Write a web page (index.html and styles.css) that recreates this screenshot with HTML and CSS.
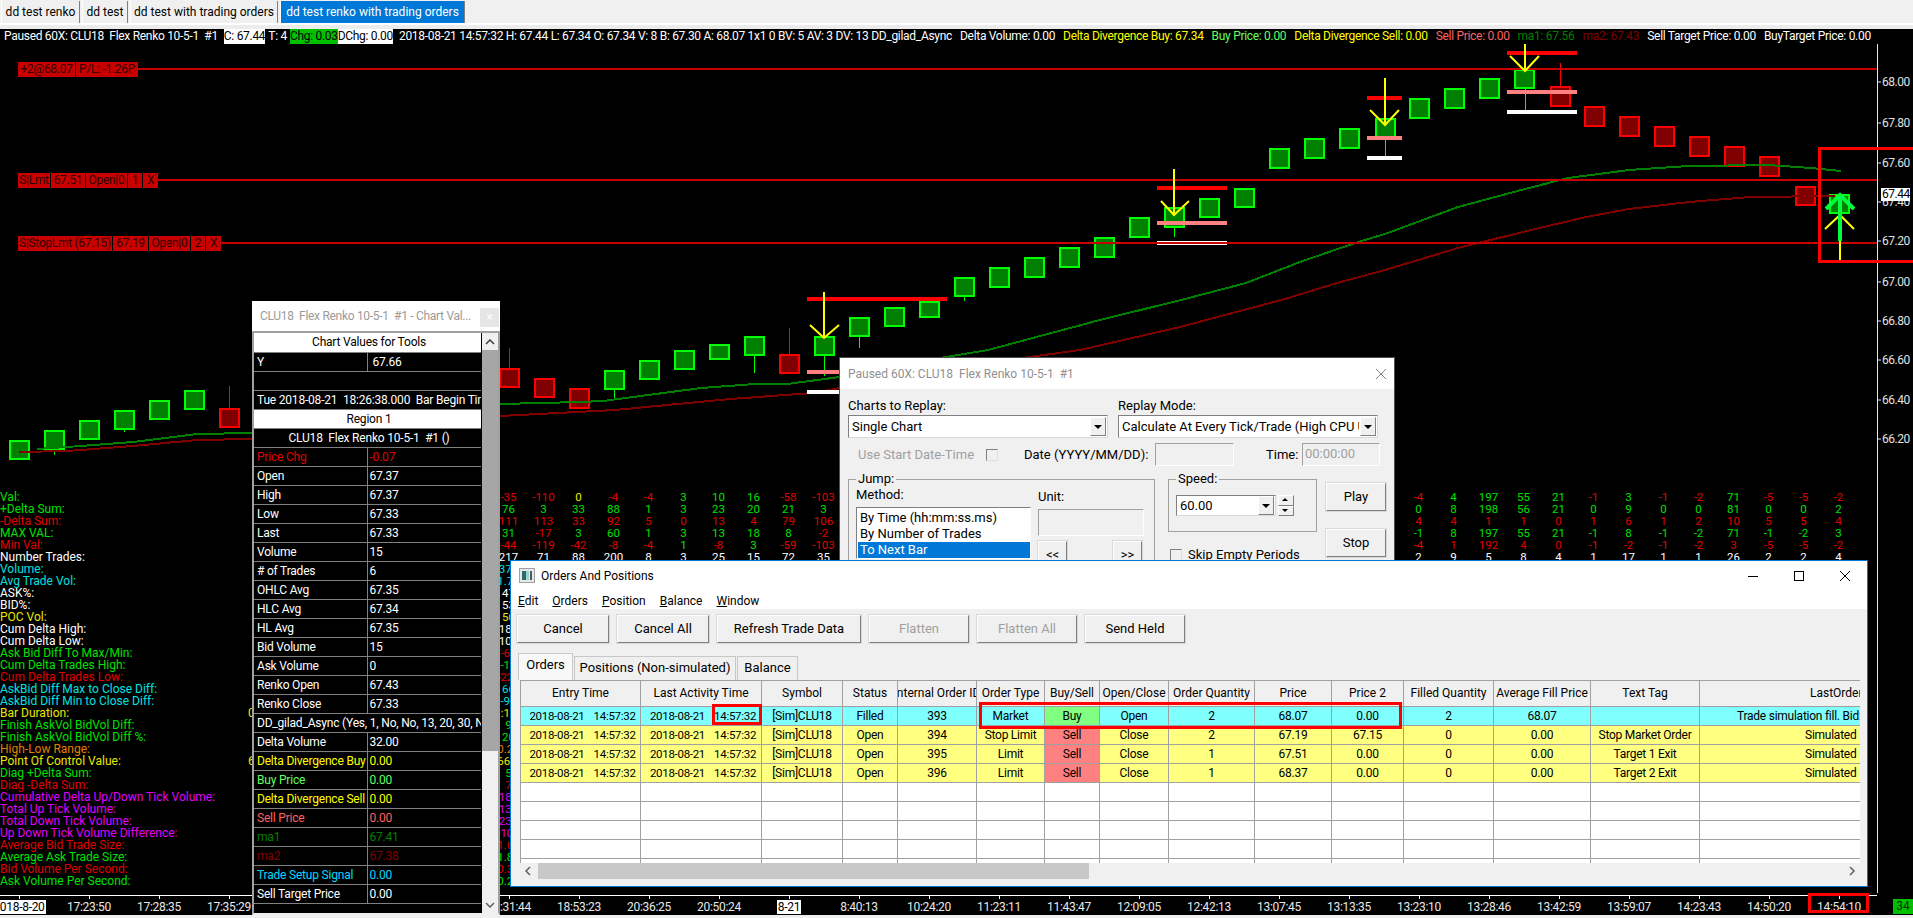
FILE: index.html
```html
<!DOCTYPE html>
<html lang="en">
<head>
<meta charset="utf-8">
<title>dd test renko with trading orders</title>
<link rel="stylesheet" href="styles.css">
</head>
<body>
<div class="app">
  <nav class="tabs">
    <span class="tab t1">dd test renko</span>
    <span class="tab t2">dd test</span>
    <span class="tab t3">dd test with trading orders</span>
    <span class="tab t4 active">dd test renko with trading orders</span>
  </nav>
  <div class="tabline"></div>
  <div class="info">
    <span class="wht">Paused 60X: CLU18&nbsp; Flex Renko 10-5-1&nbsp; #1</span>
    <span class="chip chip-w c1">C: 67.44</span>
    <span class="wht">T: 4</span>
    <span class="chip chip-g">Chg: 0.03</span><span class="chip chip-w">DChg: 0.00</span>
    <span class="wht d1">2018-08-21 14:57:32 H: 67.44 L: 67.34 O: 67.34 V: 8 B: 67.30 A: 68.07 1x1 0 BV: 5 AV: 3 DV: 13 DD_gilad_Async</span>
    <span class="wht seg">Delta Volume: 0.00</span>
    <span class="yel seg">Delta Divergence Buy: 67.34</span>
    <span class="lgr seg">Buy Price: 0.00</span>
    <span class="yel seg">Delta Divergence Sell: 0.00</span>
    <span class="lrd seg">Sell Price: 0.00</span>
    <span class="dgr seg">ma1: 67.56</span>
    <span class="drd seg">ma2: 67.43</span>
    <span class="wht seg">Sell Target Price: 0.00</span>
    <span class="wht seg">BuyTarget Price: 0.00</span>
  </div>

  <main class="chart">
    <svg class="canvas" viewBox="0 44 1913 851" width="1913" height="851" xmlns="http://www.w3.org/2000/svg">
      <g class="bar-g">
        <rect x="10" y="441" width="19" height="18"/><rect x="45" y="431" width="19" height="18"/><rect x="80" y="421" width="19" height="18"/><rect x="115" y="411" width="19" height="18"/><rect x="150" y="401" width="19" height="18"/><rect x="185" y="391" width="19" height="18"/>
        <rect x="605" y="371" width="19" height="18"/><rect x="640" y="361" width="19" height="18"/><rect x="675" y="351" width="19" height="18"/><rect x="710" y="345" width="19" height="14"/><rect x="745" y="337" width="19" height="18"/><rect x="815" y="337" width="19" height="18"/><rect x="850" y="318" width="19" height="18"/><rect x="885" y="308" width="19" height="18"/><rect x="920" y="302" width="19" height="15"/><rect x="955" y="278" width="19" height="18"/><rect x="990" y="268" width="19" height="19"/><rect x="1025" y="258" width="19" height="19"/><rect x="1060" y="248" width="19" height="19"/><rect x="1095" y="238" width="19" height="19"/><rect x="1130" y="218" width="19" height="19"/><rect x="1165" y="208" width="19" height="19"/><rect x="1200" y="199" width="19" height="18"/><rect x="1235" y="189" width="19" height="18"/><rect x="1270" y="149" width="19" height="19"/><rect x="1305" y="139" width="19" height="19"/><rect x="1340" y="129" width="19" height="19"/><rect x="1376" y="119" width="19" height="19"/><rect x="1410" y="99" width="19" height="19"/><rect x="1445" y="89" width="19" height="19"/><rect x="1480" y="79" width="19" height="19"/><rect x="1515" y="70" width="19" height="18"/><rect x="1830" y="195" width="19" height="18"/>
        <path d="M54 450V455M124 430V432M614 390V398M754 356V373M824 356V376M859 337V348M964 297V301M1174 228V237M1385 139V156M1525 89V110"/>
      </g>
      <g class="bar-r">
        <rect x="220" y="409" width="19" height="18"/><rect x="500" y="369" width="19" height="18"/><rect x="535" y="379" width="19" height="18"/><rect x="570" y="389" width="19" height="19"/><rect x="780" y="355" width="19" height="18"/><rect x="1551" y="87" width="19" height="19"/><rect x="1585" y="107" width="19" height="19"/><rect x="1620" y="117" width="19" height="19"/><rect x="1655" y="127" width="19" height="19"/><rect x="1690" y="137" width="19" height="19"/><rect x="1725" y="147" width="19" height="19"/><rect x="1760" y="157" width="19" height="19"/><rect x="1796" y="187" width="19" height="18"/>
        <path d="M229 408V386M509 368V348M789 354V328M1560 86V63"/>
      </g>
      <polyline class="ma1" points="37,449 67,447 133,442 197,434 252,433 500,404 580,402 603,401 701,388 755,384 787,384 840,377 940,358 988,350 1100,320 1185,299 1246,283 1300,262 1355,243 1385,234 1458,207 1525,189 1568,178 1629,170 1689,166 1768,165 1811,168 1841,171"/>
      <polyline class="ma2" points="19,452 67,451 133,446 197,440 252,439 500,416 615,410 730,399 813,393 936,370 1080,350 1180,327 1285,299 1337,283 1385,270 1458,248 1531,230 1586,217 1629,209 1689,202 1750,197 1835,196"/>
      <path class="mk-wht" d="M807 392H877M1157 243H1227M1367 158H1402M1507 112H1577"/>
      <path class="oline" d="M138 69H1877M158 180H1877M220 243H1877"/>
      <path class="mk-red" d="M807 299H947M1157 188H1227M1367 98H1402M1507 53H1577"/>
      <path class="mk-pink" d="M807 372H877M1157 223H1227M1367 138H1402M1507 92H1577"/>
      <path class="mk-yel" d="M824 292V338M810 325L824 338L839 325M1174 169V215M1161 201L1174 215L1189 201M1385 78V125M1370 110L1385 125L1399 110M1525 44V71M1510 56L1525 71L1539 56M1840 215V260M1825 229L1840 215L1854 229"/>
      <path class="mk-grn" d="M1840 241V196M1826 209L1840 195L1854 209"/>
      <path class="axis" d="M1877.500 44V893M1877 82H1881M1877 123H1881M1877 163H1881M1877 202H1881M1877 241H1881M1877 282H1881M1877 321H1881M1877 360H1881M1877 400H1881M1877 439H1881"/>
      <g class="plabels">
        <text x="1882" y="86">68.00</text><text x="1882" y="127">67.80</text><text x="1882" y="167">67.60</text><text x="1882" y="206">67.40</text><text x="1882" y="245">67.20</text><text x="1882" y="286">67.00</text><text x="1882" y="325">66.80</text><text x="1882" y="364">66.60</text><text x="1882" y="404">66.40</text><text x="1882" y="443">66.20</text>
      </g>
      <rect class="plast-bg" x="1881" y="188" width="29" height="13"/>
      <text class="plast" x="1882" y="198">67.44</text>
      <path class="rbox" d="M1913 148.500H1819.500V261.500H1913"/>
    </svg>

    <div class="order-tag tag1"><span class="s57">+2@68.07</span><span class="s62">P/L: -1.26P</span></div>
    <div class="order-tag tag2"><span class="s32">S|Lmt</span><span class="s34">67.51</span><span class="s41">Open|0</span><span class="s14">1</span><span class="s15">X</span></div>
    <div class="order-tag tag3"><span class="s94">S|StopLmt (67.15)</span><span class="s35">67.19</span><span class="s41">Open|0</span><span class="s14">2</span><span class="s15">X</span></div>

    <ul class="study-labels">
      <li class="grn">Val:</li><li class="grn">+Delta Sum:</li><li class="red">-Delta Sum:</li><li class="grn">MAX VAL:</li><li class="red">Min Val:</li><li class="wht">Number Trades:</li><li class="cya">Volume:</li><li class="cya">Avg Trade Vol:</li><li class="wht">ASK%:</li><li class="wht">BID%:</li><li class="yel2">POC Vol:</li><li class="wht">Cum Delta High:</li><li class="wht">Cum Delta Low:</li><li class="grn">Ask Bid Diff To Max/Min:</li><li class="grn">Cum Delta Trades High:</li><li class="red">Cum Delta Trades Low:</li><li class="cya">AskBid Diff Max to Close Diff:</li><li class="cya">AskBid Diff Min to Close Diff:</li><li class="yel2">Bar Duration:</li><li class="grn">Finish AskVol BidVol Diff:</li><li class="grn">Finish AskVol BidVol Diff %:</li><li class="org">High-Low Range:</li><li class="yel2">Point Of Control Value:</li><li class="grn">Diag +Delta Sum:</li><li class="red">Diag -Delta Sum:</li><li class="mag">Cumulative Delta Up/Down Tick Volume:</li><li class="mag">Total Up Tick Volume:</li><li class="mag">Total Down Tick Volume:</li><li class="mag">Up Down Tick Volume Difference:</li><li class="red">Average Bid Trade Size:</li><li class="grn">Average Ask Trade Size:</li><li class="red">Bid Volume Per Second:</li><li class="grn">Ask Volume Per Second:</li>
    </ul>
    <span class="stub stub-a yel2">00:00</span>
    <span class="stub stub-b yel2">66.87</span>

    <div class="vals vals-left">
      <b class="red">-35</b><b class="red">-110</b><b class="yel2">0</b><b class="red">-4</b><b class="red">-4</b><b class="grn">3</b><b class="grn">10</b><b class="grn">16</b><b class="red">-58</b><b class="red">-103</b>
      <b class="grn">76</b><b class="grn">3</b><b class="grn">33</b><b class="grn">88</b><b class="grn">1</b><b class="grn">3</b><b class="grn">23</b><b class="grn">20</b><b class="grn">21</b><b class="grn">3</b>
      <b class="red">111</b><b class="red">113</b><b class="red">33</b><b class="red">92</b><b class="red">5</b><b class="red">0</b><b class="red">13</b><b class="red">4</b><b class="red">79</b><b class="red">106</b>
      <b class="grn">31</b><b class="red">-17</b><b class="grn">3</b><b class="grn">60</b><b class="grn">1</b><b class="grn">3</b><b class="grn">13</b><b class="grn">18</b><b class="grn">8</b><b class="red">-2</b>
      <b class="red">-44</b><b class="red">-119</b><b class="red">-42</b><b class="red">-8</b><b class="red">-4</b><b class="grn">1</b><b class="red">-8</b><b class="grn">3</b><b class="red">-59</b><b class="red">-103</b>
      <b class="wht">217</b><b class="wht">71</b><b class="wht">88</b><b class="wht">200</b><b class="wht">8</b><b class="wht">3</b><b class="wht">25</b><b class="wht">15</b><b class="wht">72</b><b class="wht">35</b>
    </div>
    <div class="vals vals-col">
      <b class="cya">374</b><b class="cya">1.74</b><b class="wht">47</b><b class="wht">53</b><b class="yel2">50</b><b class="wht">186</b><b class="wht">103</b><b class="red">-64</b><b class="grn">-18</b><b class="red">-224</b><b class="cya">66</b><b class="cya">-93</b><b class="yel2">:16</b><b class="grn">9</b><b class="grn">20</b><b class="org">0.27</b><b class="yel2">66.8</b><b class="grn">5</b><b class="red">7</b><b class="mag">186</b><b class="mag">134</b><b class="mag">230</b><b class="mag">-106</b><b class="red">1.66</b><b class="grn">1.87</b><b class="red">0.33</b><b class="grn">0.27</b>
    </div>
    <div class="vals vals-right">
      <b class="red">-4</b><b class="grn">4</b><b class="grn">197</b><b class="grn">55</b><b class="grn">21</b><b class="red">-1</b><b class="grn">3</b><b class="red">-1</b><b class="red">-2</b><b class="grn">71</b><b class="red">-5</b><b class="red">-5</b><b class="red">-2</b>
      <b class="grn">0</b><b class="grn">8</b><b class="grn">198</b><b class="grn">56</b><b class="grn">21</b><b class="grn">0</b><b class="grn">9</b><b class="grn">0</b><b class="grn">0</b><b class="grn">81</b><b class="grn">0</b><b class="grn">0</b><b class="grn">2</b>
      <b class="red">4</b><b class="red">4</b><b class="red">1</b><b class="red">1</b><b class="red">0</b><b class="red">1</b><b class="red">6</b><b class="red">1</b><b class="red">2</b><b class="red">10</b><b class="red">5</b><b class="red">5</b><b class="red">4</b>
      <b class="grn">-1</b><b class="grn">8</b><b class="grn">197</b><b class="grn">55</b><b class="grn">21</b><b class="grn">-1</b><b class="grn">8</b><b class="grn">-1</b><b class="grn">-2</b><b class="grn">71</b><b class="grn">-1</b><b class="grn">-2</b><b class="grn">3</b>
      <b class="red">-4</b><b class="red">1</b><b class="red">192</b><b class="red">4</b><b class="red">0</b><b class="red">-1</b><b class="red">-2</b><b class="red">-1</b><b class="red">-2</b><b class="red">3</b><b class="red">-5</b><b class="red">-5</b><b class="red">-2</b>
      <b class="wht">2</b><b class="wht">9</b><b class="wht">5</b><b class="wht">8</b><b class="wht">4</b><b class="wht">1</b><b class="wht">17</b><b class="wht">1</b><b class="wht">1</b><b class="wht">26</b><b class="wht">2</b><b class="wht">2</b><b class="wht">4</b>
    </div>
  </main>

  <footer class="timeaxis">
    <div class="ticks">
      <span><i class="boxed">2018-8-20</i></span><span><i>17:23:50</i></span><span><i>17:28:35</i></span><span><i>17:35:29</i></span><span></span><span></span><span></span><span><i>18:31:44</i></span><span><i>18:53:23</i></span><span><i>20:36:25</i></span><span><i>20:50:24</i></span><span><i class="boxed">8-21</i></span><span><i>8:40:13</i></span><span><i>10:24:20</i></span><span><i>11:23:11</i></span><span><i>11:43:47</i></span><span><i>12:09:05</i></span><span><i>12:42:13</i></span><span><i>13:07:45</i></span><span><i>13:13:35</i></span><span><i>13:23:10</i></span><span><i>13:28:46</i></span><span><i>13:42:59</i></span><span><i>13:59:07</i></span><span><i>14:23:43</i></span><span><i>14:50:20</i></span><span><i>14:54:10</i></span>
    </div>
    <span class="count">34</span>
    <span class="time-hl"></span>
  </footer>
  <div class="bottomstrip"></div>

  <section class="win values">
    <header class="values-title"><span>CLU18&nbsp; Flex Renko 10-5-1&nbsp; #1 - Chart Val...</span><span class="vclose">×</span></header>
    <div class="values-body">
      <table class="vtable">
        <colgroup><col class="vc1"><col class="vc2"></colgroup>
        <tr class="hd"><td colspan="2">Chart Values for Tools</td></tr>
        <tr><td>Y</td><td class="pad">67.66</td></tr>
        <tr><td colspan="2"></td></tr>
        <tr><td colspan="2"><div class="clip">Tue 2018-08-21&nbsp; 18:26:38.000&nbsp; Bar Begin Time</div></td></tr>
        <tr class="hd"><td colspan="2">Region 1</td></tr>
        <tr class="ct"><td colspan="2">CLU18&nbsp; Flex Renko 10-5-1&nbsp; #1 ()</td></tr>
        <tr class="red"><td>Price Chg</td><td>-0.07</td></tr>
        <tr><td>Open</td><td>67.37</td></tr>
        <tr><td>High</td><td>67.37</td></tr>
        <tr><td>Low</td><td>67.33</td></tr>
        <tr><td>Last</td><td>67.33</td></tr>
        <tr><td>Volume</td><td>15</td></tr>
        <tr><td># of Trades</td><td>6</td></tr>
        <tr><td>OHLC Avg</td><td>67.35</td></tr>
        <tr><td>HLC Avg</td><td>67.34</td></tr>
        <tr><td>HL Avg</td><td>67.35</td></tr>
        <tr><td>Bid Volume</td><td>15</td></tr>
        <tr><td>Ask Volume</td><td>0</td></tr>
        <tr><td>Renko Open</td><td>67.43</td></tr>
        <tr><td>Renko Close</td><td>67.33</td></tr>
        <tr><td colspan="2"><div class="clip">DD_gilad_Async (Yes, 1, No, No, 13, 20, 30, No, 5)</div></td></tr>
        <tr><td>Delta Volume</td><td>32.00</td></tr>
        <tr class="yel"><td><div class="clip">Delta Divergence Buy</div></td><td>0.00</td></tr>
        <tr class="lgr"><td>Buy Price</td><td>0.00</td></tr>
        <tr class="yel"><td><div class="clip">Delta Divergence Sell</div></td><td>0.00</td></tr>
        <tr class="lrd"><td>Sell Price</td><td>0.00</td></tr>
        <tr class="dgr"><td>ma1</td><td>67.41</td></tr>
        <tr class="drd"><td>ma2</td><td>67.38</td></tr>
        <tr class="cyb"><td>Trade Setup Signal</td><td>0.00</td></tr>
        <tr><td>Sell Target Price</td><td>0.00</td></tr>
      </table>
      <div class="vscroll">
        <span class="vs-btn"><svg width="10" height="6" viewBox="0 0 10 6"><path d="M1 5L5 1L9 5" fill="none" stroke="#404040" stroke-width="1.500"/></svg></span>
        <span class="vs-thumb"></span>
        <span class="vs-rest"></span>
        <span class="vs-btn"><svg width="10" height="6" viewBox="0 0 10 6"><path d="M1 1L5 5L9 1" fill="none" stroke="#606060" stroke-width="1.500"/></svg></span>
      </div>
    </div>
  </section>

  <section class="win replay">
    <header class="replay-title"><span>Paused 60X: CLU18&nbsp; Flex Renko 10-5-1&nbsp; #1</span>
      <svg width="12" height="12" viewBox="0 0 12 12"><path d="M1 1L11 11M11 1L1 11" stroke="#808080" fill="none"/></svg>
    </header>
    <div class="replay-body">
      <div class="r-row1">
        <div class="field"><label>Charts to Replay:</label><div class="combo"><span>Single Chart</span><i class="cbtn"></i></div></div>
        <div class="field"><label>Replay Mode:</label><div class="combo"><span>Calculate At Every Tick/Trade (High CPU Usage)</span><i class="cbtn"></i></div></div>
      </div>
      <div class="r-row2">
        <span class="dim usestart">Use Start Date-Time</span><i class="check"></i>
        <span class="datelbl">Date (YYYY/MM/DD):</span><span class="rinput dateinput"></span>
        <span class="timelbl">Time:</span><span class="rinput timeinput">00:00:00</span>
      </div>
      <div class="r-row3">
        <fieldset class="group jump">
          <legend>Jump:</legend>
          <div class="jump-inner">
            <div class="jump-l">
              <div class="lbl">Method:</div>
              <ul class="listbox"><li>By Time (hh:mm:ss.ms)</li><li>By Number of Trades</li><li class="sel">To Next Bar</li></ul>
            </div>
            <div class="jump-r">
              <div class="lbl">Unit:</div>
              <span class="rinput unitinput"></span>
              <div class="jumpbtns"><span class="btn jbtn">&lt;&lt;</span><span class="btn jbtn">&gt;&gt;</span></div>
            </div>
          </div>
        </fieldset>
        <div class="speedcol">
          <fieldset class="group speed">
            <legend>Speed:</legend>
            <div class="speed-inner">
              <div class="combo speedcombo"><span>60.00</span><i class="cbtn"></i></div>
              <div class="spin"><i class="sp-up"></i><i class="sp-dn"></i></div>
            </div>
          </fieldset>
          <div class="skip"><i class="check"></i><span>Skip Empty Periods</span></div>
        </div>
        <div class="playcol"><span class="btn pbtn">Play</span><span class="btn pbtn">Stop</span></div>
      </div>
    </div>
  </section>

  <section class="win orders">
    <header class="o-title">
      <svg class="o-icon" width="16" height="15" viewBox="0 0 16 15"><rect x="0.500" y="0.500" width="15" height="14" fill="#e8e8e8" stroke="#a0a0a0"/><rect x="3" y="3" width="4" height="9" fill="#2c6c70"/><rect x="7" y="3" width="3" height="9" fill="#9fd0d0"/><rect x="11" y="3" width="2" height="9" fill="#505860"/></svg>
      <span class="o-name">Orders And Positions</span>
      <span class="o-ctrl">
        <svg width="12" height="12" viewBox="0 0 12 12"><path d="M1 6.500H11" stroke="#000"/></svg>
        <svg width="12" height="12" viewBox="0 0 12 12"><rect x="1.500" y="1.500" width="9" height="9" fill="none" stroke="#000"/></svg>
        <svg width="12" height="12" viewBox="0 0 12 12"><path d="M1 1L11 11M11 1L1 11" stroke="#000" fill="none"/></svg>
      </span>
    </header>
    <div class="o-menu"><span><u>E</u>dit</span><span><u>O</u>rders</span><span><u>P</u>osition</span><span><u>B</u>alance</span><span><u>W</u>indow</span></div>
    <div class="o-tools">
      <span class="btn tb w92">Cancel</span><span class="btn tb w92">Cancel All</span><span class="btn tb w144">Refresh Trade Data</span><span class="btn tb w100 dis">Flatten</span><span class="btn tb w100 dis">Flatten All</span><span class="btn tb w100">Send Held</span>
    </div>
    <div class="o-tabs"><span class="otab on">Orders</span><span class="otab otab2">Positions (Non-simulated)</span><span class="otab otab3">Balance</span></div>
    <div class="o-tablewrap">
      <table class="otable">
        <colgroup><col class="c120"><col class="c121"><col class="c81"><col class="c55"><col class="c79"><col class="c68"><col class="c55"><col class="c69"><col class="c86"><col class="c77"><col class="c72"><col class="c90"><col class="c97"><col class="c109"><col class="c161"></colgroup>
        <tr class="ohead"><th>Entry Time</th><th>Last Activity Time</th><th>Symbol</th><th>Status</th><th><div class="ctr-clip">Internal Order ID</div></th><th>Order Type</th><th>Buy/Sell</th><th>Open/Close</th><th>Order Quantity</th><th>Price</th><th>Price 2</th><th>Filled Quantity</th><th>Average Fill Price</th><th>Text Tag</th><th class="lastcol p110">LastOrderMessage</th></tr>
        <tr class="fill"><td class="dt">2018-08-21&nbsp; 14:57:32</td><td class="dt">2018-08-21&nbsp; 14:57:32</td><td>[Sim]CLU18</td><td>Filled</td><td>393</td><td>Market</td><td class="buy">Buy</td><td>Open</td><td>2</td><td>68.07</td><td>0.00</td><td>2</td><td>68.07</td><td></td><td class="lastcol p37">Trade simulation fill. Bid: 67.30</td></tr>
        <tr class="open"><td class="dt">2018-08-21&nbsp; 14:57:32</td><td class="dt">2018-08-21&nbsp; 14:57:32</td><td>[Sim]CLU18</td><td>Open</td><td>394</td><td>Stop Limit</td><td class="sell">Sell</td><td>Close</td><td>2</td><td>67.19</td><td>67.15</td><td>0</td><td>0.00</td><td>Stop Market Order</td><td class="lastcol p105">Simulated</td></tr>
        <tr class="open"><td class="dt">2018-08-21&nbsp; 14:57:32</td><td class="dt">2018-08-21&nbsp; 14:57:32</td><td>[Sim]CLU18</td><td>Open</td><td>395</td><td>Limit</td><td class="sell">Sell</td><td>Close</td><td>1</td><td>67.51</td><td>0.00</td><td>0</td><td>0.00</td><td>Target 1 Exit</td><td class="lastcol p105">Simulated</td></tr>
        <tr class="open"><td class="dt">2018-08-21&nbsp; 14:57:32</td><td class="dt">2018-08-21&nbsp; 14:57:32</td><td>[Sim]CLU18</td><td>Open</td><td>396</td><td>Limit</td><td class="sell">Sell</td><td>Close</td><td>1</td><td>68.37</td><td>0.00</td><td>0</td><td>0.00</td><td>Target 2 Exit</td><td class="lastcol p105">Simulated</td></tr>
        <tr class="blank"><td></td><td></td><td></td><td></td><td></td><td></td><td></td><td></td><td></td><td></td><td></td><td></td><td></td><td></td><td></td></tr>
        <tr class="blank"><td></td><td></td><td></td><td></td><td></td><td></td><td></td><td></td><td></td><td></td><td></td><td></td><td></td><td></td><td></td></tr>
        <tr class="blank"><td></td><td></td><td></td><td></td><td></td><td></td><td></td><td></td><td></td><td></td><td></td><td></td><td></td><td></td><td></td></tr>
        <tr class="blank"><td></td><td></td><td></td><td></td><td></td><td></td><td></td><td></td><td></td><td></td><td></td><td></td><td></td><td></td><td></td></tr>
        <tr class="blank"><td></td><td></td><td></td><td></td><td></td><td></td><td></td><td></td><td></td><td></td><td></td><td></td><td></td><td></td><td></td></tr>
      </table>
    </div>
    <div class="o-hscroll">
      <svg width="8" height="10" viewBox="0 0 8 10"><path d="M6 1L2 5L6 9" fill="none" stroke="#606060" stroke-width="1.500"/></svg>
      <span class="o-thumb"></span>
      <svg class="o-right" width="8" height="10" viewBox="0 0 8 10"><path d="M2 1L6 5L2 9" fill="none" stroke="#606060" stroke-width="1.500"/></svg>
    </div>
    <span class="hl hl-time"></span>
    <span class="hl hl-row"></span>
  </section>
</div>
</body>
</html>
```
FILE: styles.css
```css
* { box-sizing: border-box; }
html, body { margin: 0; padding: 0; background: #000; }
body { width: 1913px; height: 918px; overflow: hidden; font: 12px/16px Roboto, "Open Sans", sans-serif; color: #000; }
ul { list-style: none; margin: 0; padding: 0; }
.app { position: relative; width: 1913px; height: 918px; display: flex; flex-direction: column; overflow: hidden; background: #000; }

/* color words */
.wht { color: #fff; } .yel { color: #ffff00; } .yel2 { color: #e8e800; } .lgr { color: #60ff60; } .lrd { color: #ff6060; }
.dgr { color: #008000; } .drd { color: #800000; } .grn { color: #00e000; } .red { color: #e00000; } .cya { color: #00e0e0; }
.cyb { color: #00d8ff; } .org { color: #e08000; } .mag { color: #e000ff; }

/* tabs */
.tabs { height: 23px; background: #f0f0f0; display: flex; gap: 2px; padding: 1px 0 0 1px; }
.tab { display: flex; align-items: center; justify-content: center; height: 22px; border-right: 1px solid #808080; border-left: 1px solid #fff; white-space: nowrap; }
.t1 { width: 79px; } .t2 { width: 46px; } .t3 { width: 148px; } .t4 { width: 185px; }
.tab.active { background: #0078d7; color: #fff; }
.tabline { height: 6px; background: #ececec; border-top: 2px solid #fff; }

/* info strip */
.info { height: 15px; background: #000; display: flex; align-items: center; gap: 3px; padding-left: 4px; white-space: nowrap; line-height: 15px; letter-spacing: -0.300px; }
.chip { height: 15px; }
.chip-w { background: #fff; color: #000; }
.chip-g { background: #00c000; color: #000; margin-right: -3px; }
.c1 { margin-left: 3px; }
.d1 { margin-left: 3px; }
.seg { margin-left: 5px; }

/* chart */
.chart { position: relative; height: 851px; background: #000; }
.canvas { position: absolute; left: 0; top: 0; display: block; }
.bar-g rect { fill: #008000; stroke: #00ff00; stroke-width: 2; shape-rendering: crispEdges; }
.bar-g path { stroke: #00ff00; stroke-width: 1; fill: none; shape-rendering: crispEdges; }
.bar-r rect { fill: #800000; stroke: #ff0000; stroke-width: 2; shape-rendering: crispEdges; }
.bar-r path { stroke: #ff0000; stroke-width: 1; fill: none; shape-rendering: crispEdges; }
.ma1 { fill: none; stroke: #008000; stroke-width: 2; shape-rendering: crispEdges; }
.ma2 { fill: none; stroke: #800000; stroke-width: 2; shape-rendering: crispEdges; }
.oline { fill: none; stroke: #c80000; stroke-width: 2; shape-rendering: crispEdges; }
.mk-red { stroke: #ff0000; stroke-width: 4; fill: none; }
.mk-pink { stroke: #ff8080; stroke-width: 4; fill: none; }
.mk-wht { stroke: #ffffff; stroke-width: 4; fill: none; }
.mk-yel { stroke: #ffff00; stroke-width: 2; fill: none; }
.mk-grn { stroke: #00ff40; stroke-width: 4; fill: none; }
.axis { stroke: #e8e8e8; stroke-width: 1; fill: none; }
.plabels text { fill: #e0e0e0; font-size: 12px; letter-spacing: -0.500px; }
.plast-bg { fill: #fff; }
.plast { fill: #000; font-size: 12px; letter-spacing: -0.500px; }
.rbox { fill: none; stroke: #ff0000; stroke-width: 3; }

.order-tag { position: absolute; left: 18px; height: 15px; display: flex; gap: 1px; background: #000; color: #300000; line-height: 15px; white-space: nowrap; font-size: 12px; letter-spacing: -0.300px; }
.order-tag span { background: #c80000; display: block; text-align: center; overflow: hidden; }
.s14 { width: 14px; } .s15 { width: 15px; } .s32 { width: 32px; } .s34 { width: 34px; } .s35 { width: 35px; } .s41 { width: 41px; } .s57 { width: 57px; } .s62 { width: 62px; } .s94 { width: 94px; }
.tag1 { top: 18px; } .tag2 { top: 129px; } .tag3 { top: 192px; }

.study-labels { position: absolute; left: 0; top: 447px; line-height: 12px; white-space: nowrap; font-size: 12px; }
.study-labels li { height: 12px; }
.stub { position: absolute; left: 238px; width: 50px; text-align: center; line-height: 12px; }
.stub-a { top: 663px; } .stub-b { top: 711px; }

.vals { position: absolute; display: grid; grid-auto-rows: 12px; line-height: 12px; text-align: center; font-size: 11.500px; }
.vals b { font-weight: 400; }
.vals-left { left: 491px; top: 447px; grid-template-columns: repeat(10, 35px); }
.vals-col { left: 491px; top: 519px; grid-template-columns: 35px; }
.vals-right { left: 1401px; top: 447px; grid-template-columns: repeat(13, 35px); }

/* time axis */
.timeaxis { position: relative; height: 20px; background: #000; }
.ticks { width: 1877px; height: 20px; border-top: 1px solid #fff; display: flex; overflow: hidden; padding-left: 0; }
.ticks span { flex: 0 0 70px; margin-left: 0; position: relative; text-align: center; color: #e8e8e8; line-height: 18px; padding-top: 2px; letter-spacing: -0.300px; }
.ticks span:first-child { margin-left: -16px; }
.ticks i { font-style: normal; }
.ticks span:not(:empty)::before { content: ""; position: absolute; left: 35px; top: 0; width: 1px; height: 3px; background: #fff; }
.boxed { background: #fff; color: #000; padding: 0 1px; }
.count { position: absolute; right: 0; top: 4px; width: 20px; height: 15px; background: #00c000; color: #003000; text-align: center; line-height: 15px; }
.time-hl { position: absolute; left: 1808px; top: -2px; width: 61px; height: 20px; border: 3px solid #ff0000; }
.bottomstrip { height: 3px; background: #f0f0f0; }

/* floating windows */
.win { position: absolute; font-size: 13px; }

.values { left: 252px; top: 301px; width: 248px; height: 614px; background: #fff; font-size: 12px; }
.values-title { height: 30px; display: flex; align-items: center; padding-left: 8px; color: #9a9a9a; white-space: nowrap; letter-spacing: -0.300px; }
.vclose { position: absolute; right: 1px; top: 7px; width: 19px; height: 19px; background: #e6e6e6; color: #fff; text-align: center; line-height: 19px; }
.values-body { height: 584px; background: #000; border: 2px solid #a0a0a0; border-right-width: 2px; border-bottom: 2px solid #f0f0f0; display: flex; }
.vtable { table-layout: fixed; width: 227px; border-collapse: collapse; color: #fff; height: 0; letter-spacing: -0.200px; }
.vc1 { width: 113px; } .vc2 { width: 114px; }
.vtable td { height: 19px; padding: 0 0 0 2px; border: 1px solid #808080; border-top: 0; line-height: 18px; white-space: nowrap; overflow: hidden; }
.vtable td:first-child { border-left: 0; padding-left: 3px; }
.vtable td:last-child { border-right: 0; }
.vtable td.pad { padding-left: 5px; }
.clip { overflow: hidden; }
.hd td { background: #fff; color: #000; text-align: center; }
.vtable .ct td { text-align: center; }
.vscroll { flex: 1; margin-left: 1px; display: flex; flex-direction: column; background: #f0f0f0; }
.vs-btn { height: 17px; display: flex; align-items: center; justify-content: center; background: #f0f0f0; }
.vs-thumb { height: 401px; background: #a6a6a6; }
.vs-rest { flex: 1; }

.replay { left: 840px; top: 358px; width: 554px; height: 204px; background: #f0f0f0; overflow: hidden; box-shadow: 0 0 0 1px #505050; }
.replay-title { height: 31px; background: #fff; color: #909090; display: flex; align-items: center; justify-content: space-between; padding: 0 7px 0 8px; font-size: 12px; }
.replay-body { padding: 9px 0 0 8px; }
.r-row1 { display: flex; gap: 10px; }
.field { width: 260px; display: flex; flex-direction: column; }
.field label { height: 17px; }
.combo { height: 23px; background: #fff; border: 1px solid; border-color: #808080 #d8d8d8 #d8d8d8 #808080; display: flex; align-items: center; padding-left: 3px; position: relative; overflow: hidden; white-space: nowrap; }
.combo span { display: block; overflow: hidden; flex: 1; }
.cbtn { flex: 0 0 16px; height: 19px; margin: 0 1px; background: #f0f0f0; border: 1px solid; border-color: #fff #808080 #808080 #fff; position: relative; }
.cbtn::after { content: ""; position: absolute; left: 3px; top: 7px; border: 4px solid transparent; border-top-color: #000; border-bottom-width: 0; }
.r-row2 { display: flex; align-items: center; height: 23px; margin-top: 5px; }
.dim { color: #a0a0a0; }
.usestart { margin-left: 10px; width: 128px; }
.check { display: block; width: 12px; height: 12px; background: #f0f0f0; border: 1px solid; border-color: #808080 #e0e0e0 #e0e0e0 #808080; }
.datelbl { margin-left: 26px; width: 131px; }
.rinput { display: block; background: #f0f0f0; border: 1px solid; border-color: #a0a0a0 #ffffff #ffffff #a0a0a0; height: 23px; }
.dateinput { width: 79px; }
.timelbl { margin-left: 32px; width: 36px; }
.timeinput { width: 78px; color: #a0a0a0; padding-left: 2px; line-height: 20px; }
.r-row3 { display: flex; margin-top: 5px; align-items: flex-start; }
.group { margin: 0; padding: 0; border: 1px solid #a0a0a0; min-width: 0; }
.group legend { padding: 0 2px; margin-left: 7px; line-height: 16px; }
.jump { width: 307px; height: 120px; }
.jump-inner { display: flex; gap: 7px; padding-left: 7px; }
.jump-l { width: 175px; }
.jump-r { width: 106px; padding-top: 2px; }
.lbl { height: 16px; }
.listbox { margin-top: 4px; background: #fff; border: 1px solid; border-color: #808080 #fff #fff #808080; padding: 2px 0 0 1px; }
.listbox li { height: 16px; padding-left: 2px; }
.listbox .sel { background: #0078d7; color: #fff; }
.unitinput { height: 27px; margin-top: 4px; }
.jumpbtns { display: flex; justify-content: space-between; margin-top: 5px; padding-right: 2px; }
.btn { display: flex; align-items: center; justify-content: center; background: #f0f0f0; border: 1px solid; border-color: #fff #808080 #808080 #fff; white-space: nowrap; box-shadow: 0 0 0 1px #d8d8d8; }
.jbtn { width: 29px; height: 28px; }
.speedcol { width: 149px; margin-left: 13px; }
.speed { height: 61px; }
.speed-inner { display: flex; gap: 2px; padding: 8px 0 0 7px; }
.speedcombo { width: 100px; height: 21px; }
.speedcombo span { flex: 1; }
.spin { width: 16px; display: flex; flex-direction: column; }
.spin i { height: 10.500px; background: #f0f0f0; border: 1px solid; border-color: #fff #808080 #808080 #fff; position: relative; }
.sp-up::after, .sp-dn::after { content: ""; position: absolute; left: 3px; top: 2px; border: 3px solid transparent; }
.sp-up::after { border-bottom-color: #000; border-top-width: 0; }
.sp-dn::after { border-top-color: #000; border-bottom-width: 0; }
.skip { display: flex; align-items: center; gap: 6px; margin-top: 15px; padding-left: 2px; }
.playcol { width: 60px; margin-left: 9px; padding-top: 12px; display: flex; flex-direction: column; gap: 18px; }
.pbtn { height: 28px; }

.orders { left: 510px; top: 560px; width: 1358px; height: 327px; background: #f0f0f0; border: 1px solid #0078d7; display: flex; flex-direction: column; }
.o-title { height: 29px; background: #fff; display: flex; align-items: center; padding-left: 8px; position: relative; font-size: 12px; }
.o-name { margin-left: 6px; }
.o-ctrl { margin-left: auto; display: flex; gap: 34px; margin-right: 16px; }
.o-ctrl svg { display: block; }
.o-menu { height: 19px; background: #fff; display: flex; gap: 14px; padding-left: 7px; line-height: 22px; font-size: 12px; }
.o-tools { display: flex; gap: 8px; padding: 6px 0 0 6px; height: 34px; }
.tb { height: 28px; }
.w92 { width: 92px; } .w144 { width: 144px; } .w100 { width: 100px; }
.dis { color: #a0a0a0; }
.o-tabs { display: flex; margin-top: 10px; padding-left: 7px; height: 27px; align-items: flex-end; gap: 1px; }
.otab { height: 24px; line-height: 22px; padding: 0 2px; background: #f0f0f0; border: 1px solid #c8c8c8; border-bottom: 0; text-align: center; white-space: nowrap; }
.otab.on { height: 27px; width: 55px; background: #f8f8f8; line-height: 22px; }
.otab2 { width: 162px; } .otab3 { width: 61px; }
.o-tablewrap { margin: 0 0 0 9px; width: 1340px; height: 183px; overflow: hidden; background: #fff; border-top: 1px solid #a0a0a0; font-size: 12px; }
.otable { table-layout: fixed; width: 1340px; border-collapse: collapse; }
.c120 { width: 120px; } .c121 { width: 121px; } .c81 { width: 81px; } .c55 { width: 55px; } .c79 { width: 79px; } .c68 { width: 68px; } .c69 { width: 69px; } .c86 { width: 86px; } .c77 { width: 77px; } .c72 { width: 72px; } .c90 { width: 90px; } .c97 { width: 97px; } .c109 { width: 109px; } .c161 { width: 161px; }
.otable th, .otable td { padding: 0; border: 1px solid #a0a0a0; border-top: 0; font-weight: 400; text-align: center; white-space: nowrap; overflow: hidden; }
.otable td { height: 19px; line-height: 18px; letter-spacing: -0.250px; }
.otable td.dt { font-size: 11.500px; letter-spacing: -0.300px; word-spacing: 2px; padding-left: 4px; }
.ohead th { height: 25px; background: #f0f0f0; }
.ctr-clip { width: 120px; margin-left: -21px; }
.fill td { background: #80ffff; }
.open td { background: #ffff80; }
.otable td.buy { background: #80ff80; }
.otable td.sell { background: #ff8080; }
.blank td { background: #fff; }
.otable .lastcol { text-align: left; }
.otable .p110 { padding-left: 110px; } .otable .p37 { padding-left: 37px; } .otable .p105 { padding-left: 105px; }
.o-hscroll { margin-left: 9px; width: 1340px; height: 16px; background: #f0f0f0; display: flex; align-items: center; padding: 0 4px; }
.o-thumb { margin-left: 6px; width: 551px; height: 16px; background: #c8c8c8; }
.o-right { margin-left: auto; }
.hl { position: absolute; border: 3px solid #ff0000; }
.hl-time { left: 201px; top: 143px; width: 50px; height: 21px; }
.hl-row { left: 468px; top: 141px; width: 423px; height: 27px; }
```
